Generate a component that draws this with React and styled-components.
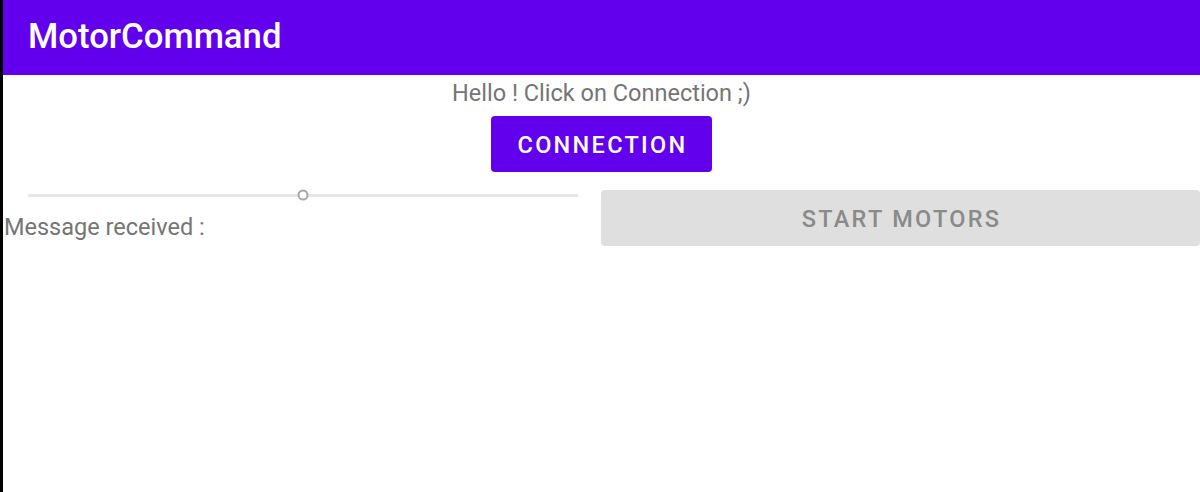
import React from "react";
import styled, { createGlobalStyle } from "styled-components";

const Global = createGlobalStyle`
  html, body { margin: 0; padding: 0; background: #000; }
  body { font-family: Roboto, "Noto Sans", sans-serif; }
  #root { height: 492px; }
`;

const Screen = styled.div`
  margin-left: 3px;
  height: 492px;
  background: #fff;
  display: flex;
  flex-direction: column;
`;

const AppBar = styled.header`
  height: 75px;
  background: #6200ee;
  display: flex;
  align-items: center;
  padding-left: 25px;
  box-sizing: border-box;
`;

const Title = styled.h1`
  margin: 0;
  color: #fff;
  font-family: Roboto, sans-serif;
  font-weight: 500;
  font-size: 34.7px;
  letter-spacing: 0;
  margin-top: -4px;
`;

const Content = styled.main`
  display: flex;
  flex-direction: column;
  align-items: stretch;
`;

const Greeting = styled.p`
  margin: 4px 0 0;
  text-align: center;
  color: #757575;
  font-size: 23.5px;
  line-height: 28px;
`;

const Button = styled.button`
  border: none;
  border-radius: 4px;
  font-family: Roboto, sans-serif;
  font-weight: 500;
  font-size: 23.5px;
  letter-spacing: 2.3px;
  text-transform: uppercase;
  height: 56px;
  cursor: pointer;
  background: ${(p) => (p.disabled ? "#dfdfdf" : "#6200ee")};
  color: ${(p) => (p.disabled ? "#8a8a8a" : "#fff")};
  padding: 2px 24px 0 26px;
`;

const Centered = styled.div`
  display: flex;
  justify-content: center;
  margin-top: 9px;
`;

const Columns = styled.div`
  display: grid;
  grid-template-columns: 598px 1fr;
  margin-top: 18px;
`;

const LeftCol = styled.div`
  display: flex;
  flex-direction: column;
`;

const SliderWrap = styled.div`
  position: relative;
  margin: -2px 23px 0 25px;
  height: 14px;
  display: flex;
  align-items: center;
`;

const Track = styled.div`
  flex: 1;
  height: 3px;
  background: #e6e6e6;
`;

const Thumb = styled.div`
  position: absolute;
  top: 50%;
  width: 7px;
  height: 7px;
  border: 2px solid #a8a8a8;
  background: #fff;
  border-radius: 50%;
  transform: translate(-50%, -50%);
`;

const Message = styled.p`
  margin: 11px 0 0 1px;
  color: #757575;
  font-size: 23.5px;
  line-height: 28px;
`;

const WideButton = styled(Button)`
  width: 100%;
  padding: 2px 0 0 2px;
`;

export default function App() {
  const value = 0.5;
  return (
    <>
      <Global />
      <Screen>
        <AppBar>
          <Title>MotorCommand</Title>
        </AppBar>
        <Content>
          <Greeting>Hello ! Click on Connection ;)</Greeting>
          <Centered>
            <Button>Connection</Button>
          </Centered>
          <Columns>
            <LeftCol>
              <SliderWrap>
                <Track />
                <Thumb style={{ left: `${value * 100}%` }} />
              </SliderWrap>
              <Message>Message received :</Message>
            </LeftCol>
            <WideButton disabled>Start Motors</WideButton>
          </Columns>
        </Content>
      </Screen>
    </>
  );
}
